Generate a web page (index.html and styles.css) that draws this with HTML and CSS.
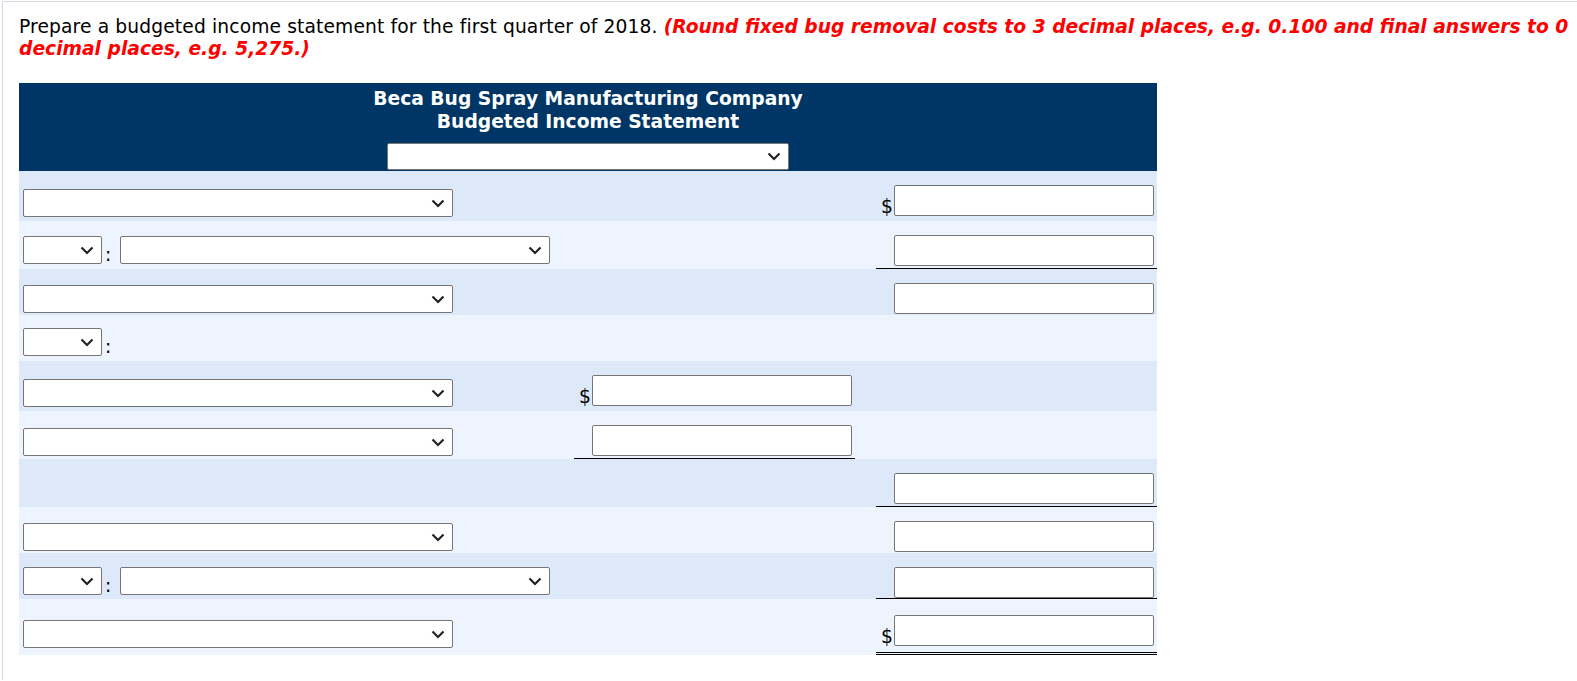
FILE: index.html
```html
<!DOCTYPE html>
<html lang="en">
<head>
<meta charset="utf-8">
<title>Budgeted Income Statement</title>
<link rel="stylesheet" href="styles.css">
</head>
<body>
<div class="frame">
  <p class="prompt">Prepare a budgeted income statement for the first quarter of 2018. <em class="note">(Round fixed bug removal costs to 3 decimal places, e.g. 0.100 and final answers to 0 decimal places, e.g. 5,275.)</em></p>

  <div class="sheet">
    <div class="head">
      <div class="title">Beca Bug Spray Manufacturing Company</div>
      <div class="title">Budgeted Income Statement</div>
      <select class="sel-period"><option></option></select>
    </div>

    <div class="row dark h50">
      <div class="lab at18"><select class="sel-wide"><option></option></select></div>
      <div></div><div></div>
      <div class="val"><div class="field"><span class="cur">$</span><input class="num" type="text"></div></div>
    </div>

    <div class="row light h48">
      <div class="lab at15"><div class="pair"><select class="sel-small"><option></option></select><span class="colon">:</span><select class="sel-wide"><option></option></select></div></div>
      <div></div><div></div>
      <div class="val line"><div class="field"><input class="num" type="text"></div></div>
    </div>

    <div class="row dark h46">
      <div class="lab at16"><select class="sel-wide"><option></option></select></div>
      <div></div><div></div>
      <div class="val"><div class="field"><input class="num" type="text"></div></div>
    </div>

    <div class="row light h46">
      <div class="lab at13"><div class="pair"><select class="sel-small"><option></option></select><span class="colon">:</span></div></div>
      <div></div><div></div><div></div>
    </div>

    <div class="row dark h50">
      <div class="lab at18"><select class="sel-wide"><option></option></select></div>
      <div class="val"><div class="field"><span class="cur">$</span><input class="num" type="text"></div></div>
      <div></div><div></div>
    </div>

    <div class="row light h48">
      <div class="lab at17"><select class="sel-wide"><option></option></select></div>
      <div class="val line"><div class="field"><input class="num" type="text"></div></div>
      <div></div><div></div>
    </div>

    <div class="row dark h48">
      <div class="lab"></div>
      <div></div><div></div>
      <div class="val line"><div class="field"><input class="num" type="text"></div></div>
    </div>

    <div class="row light h46">
      <div class="lab at16"><select class="sel-wide"><option></option></select></div>
      <div></div><div></div>
      <div class="val"><div class="field"><input class="num" type="text"></div></div>
    </div>

    <div class="row dark h46">
      <div class="lab at14"><div class="pair"><select class="sel-small"><option></option></select><span class="colon">:</span><select class="sel-wide"><option></option></select></div></div>
      <div></div><div></div>
      <div class="val line"><div class="field"><input class="num" type="text"></div></div>
    </div>

    <div class="row light h56">
      <div class="lab at21"><select class="sel-wide"><option></option></select></div>
      <div></div><div></div>
      <div class="val low dbl"><div class="field"><span class="cur">$</span><input class="num" type="text"></div></div>
    </div>
  </div>
</div>
</body>
</html>
```

FILE: styles.css
```css
html, body {
  margin: 0;
  background: #fff;
}

body {
  font-family: "DejaVu Sans", Verdana, sans-serif;
  font-size: 18.7px;
  color: #000;
}

.frame {
  margin: 1px 0 0 2px;
  border-left: 1px solid #d3dae2;
  border-top: 1px solid #d3dae2;
  padding: 14px 0 0 16px;
  min-height: 679px;
  box-sizing: border-box;
}

.prompt {
  margin: 0;
  line-height: 22px;
  letter-spacing: 0.12px;
}

.note {
  color: #f00;
  font-weight: bold;
  font-style: italic;
  letter-spacing: 0;
}

.sheet {
  width: 1138px;
  margin-top: 23px;
}

.head {
  background: #003665;
  color: #fff;
  height: 88px;
  box-sizing: border-box;
  padding: 4px 0 1px;
  display: flex;
  flex-direction: column;
  align-items: center;
}

.title {
  font-weight: bold;
  line-height: 23px;
}

select {
  -webkit-appearance: none;
  appearance: none;
  height: 28px;
  box-sizing: border-box;
  margin: 0;
  padding: 0 28px 0 4px;
  border: 1px solid #767676;
  border-radius: 2px;
  background-color: #fff;
  background-image: url("data:image/svg+xml,%3Csvg xmlns='http://www.w3.org/2000/svg' width='14' height='9' viewBox='0 0 14 9'%3E%3Cpolyline points='1.5,1.5 7,7 12.5,1.5' fill='none' stroke='%23222' stroke-width='2.2'/%3E%3C/svg%3E");
  background-repeat: no-repeat;
  background-position: right 7px center;
  background-size: 14px 9px;
  font-family: "DejaVu Sans", sans-serif;
  font-size: 13px;
}

.sel-period {
  width: 402px;
  height: 27px;
  margin-top: 10px;
}

.sel-wide { width: 430px; }
.sel-small { width: 79px; }

.row {
  display: grid;
  grid-template-columns: 555px 281px 21px 281px;
  box-sizing: border-box;
}

.dark { background: #dde8f8; }
.light { background: #edf4fe; }

.h46 { height: 46px; }
.h48 { height: 48px; }
.h50 { height: 50px; }
.h56 { height: 56px; }

.lab {
  display: flex;
  align-items: flex-start;
  padding-left: 4px;
}

.at13 { padding-top: 13px; }
.at14 { padding-top: 14px; }
.at15 { padding-top: 15px; }
.at16 { padding-top: 16px; }
.at17 { padding-top: 17px; }
.at18 { padding-top: 18px; }
.at21 { padding-top: 21px; }

.pair {
  display: flex;
  align-items: flex-end;
}

.colon {
  line-height: 18px;
  margin: 0 9px 0 3px;
}

.val {
  display: flex;
  justify-content: flex-end;
  align-items: flex-start;
  padding: 14px 3px 0 0;
}

.val.low { padding-top: 16px; }

.line { border-bottom: 1px solid #000; }
.dbl { border-bottom: 3px double #000; }

.field {
  display: flex;
  align-items: flex-end;
}

.cur {
  line-height: 18px;
  margin-right: 1px;
}

.num {
  width: 260px;
  height: 31px;
  box-sizing: border-box;
  margin: 0;
  padding: 1px 2px;
  border: 1px solid #767676;
  border-radius: 2px;
  background: #fff;
  font: inherit;
  font-size: 16px;
}
```
